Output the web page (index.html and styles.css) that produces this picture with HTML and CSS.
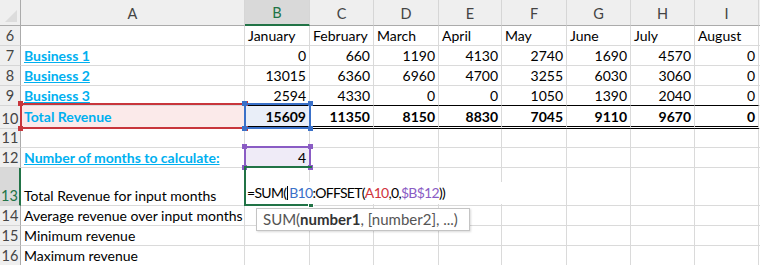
FILE: index.html
```html
<!DOCTYPE html>
<html lang="en">
<head>
  <meta charset="UTF-8" />
  <title>Revenue Sheet</title>
  <link rel="stylesheet" href="styles.css">
</head>
<body>
  <div class="sheet">
    <!-- column headers -->
    <div class="corner">
      <svg width="14" height="14" viewBox="0 0 14 14"><polygon points="13,1 13,13 1,13" fill="#dcdcdc"/></svg>
    </div>
    <div class="colhead">A</div>
    <div class="colhead sel">B</div>
    <div class="colhead">C</div>
    <div class="colhead">D</div>
    <div class="colhead">E</div>
    <div class="colhead">F</div>
    <div class="colhead">G</div>
    <div class="colhead">H</div>
    <div class="colhead">I</div>
    <div class="colhead"></div>

    <!-- row 6 -->
    <div class="rowhead">6</div>
    <div class="c"></div>
    <div class="c">January</div>
    <div class="c">February</div>
    <div class="c">March</div>
    <div class="c">April</div>
    <div class="c">May</div>
    <div class="c">June</div>
    <div class="c">July</div>
    <div class="c">August</div>
    <div class="c"></div>

    <!-- row 7 -->
    <div class="rowhead">7</div>
    <div class="c link"><u>Business 1</u></div>
    <div class="c num">0</div>
    <div class="c num">660</div>
    <div class="c num">1190</div>
    <div class="c num">4130</div>
    <div class="c num">2740</div>
    <div class="c num">1690</div>
    <div class="c num">4570</div>
    <div class="c num">0</div>
    <div class="c"></div>

    <!-- row 8 -->
    <div class="rowhead">8</div>
    <div class="c link"><u>Business 2</u></div>
    <div class="c num">13015</div>
    <div class="c num">6360</div>
    <div class="c num">6960</div>
    <div class="c num">4700</div>
    <div class="c num">3255</div>
    <div class="c num">6030</div>
    <div class="c num">3060</div>
    <div class="c num">0</div>
    <div class="c"></div>

    <!-- row 9 -->
    <div class="rowhead">9</div>
    <div class="c link"><u>Business 3</u></div>
    <div class="c num line">2594</div>
    <div class="c num line">4330</div>
    <div class="c num line">0</div>
    <div class="c num line">0</div>
    <div class="c num line">1050</div>
    <div class="c num line">1390</div>
    <div class="c num line">2040</div>
    <div class="c num line">0</div>
    <div class="c"></div>

    <!-- row 10 -->
    <div class="rowhead">10</div>
    <div class="c link fill-red">Total Revenue</div>
    <div class="c num total fill-blue">15609</div>
    <div class="c num total">11350</div>
    <div class="c num total">8150</div>
    <div class="c num total">8830</div>
    <div class="c num total">7045</div>
    <div class="c num total">9110</div>
    <div class="c num total">9670</div>
    <div class="c num total">0</div>
    <div class="c"></div>

    <!-- row 11 -->
    <div class="rowhead">11</div>
    <div class="c"></div><div class="c"></div><div class="c"></div><div class="c"></div><div class="c"></div>
    <div class="c"></div><div class="c"></div><div class="c"></div><div class="c"></div><div class="c"></div>

    <!-- row 12 -->
    <div class="rowhead">12</div>
    <div class="c link"><u>Number of months to calculate:</u></div>
    <div class="c num fill-purple">4</div>
    <div class="c"></div><div class="c"></div><div class="c"></div><div class="c"></div>
    <div class="c"></div><div class="c"></div><div class="c"></div><div class="c"></div>

    <!-- row 13 -->
    <div class="rowhead sel">13</div>
    <div class="c">Total Revenue for input months</div>
    <div class="c"></div><div class="c"></div><div class="c"></div><div class="c"></div>
    <div class="c"></div><div class="c"></div><div class="c"></div><div class="c"></div><div class="c"></div>

    <!-- row 14 -->
    <div class="rowhead">14</div>
    <div class="c">Average revenue over input months</div>
    <div class="c"></div><div class="c"></div><div class="c"></div><div class="c"></div>
    <div class="c"></div><div class="c"></div><div class="c"></div><div class="c"></div><div class="c"></div>

    <!-- row 15 -->
    <div class="rowhead">15</div>
    <div class="c">Minimum revenue</div>
    <div class="c"></div><div class="c"></div><div class="c"></div><div class="c"></div>
    <div class="c"></div><div class="c"></div><div class="c"></div><div class="c"></div><div class="c"></div>

    <!-- row 16 -->
    <div class="rowhead">16</div>
    <div class="c">Maximum revenue</div>
    <div class="c"></div><div class="c"></div><div class="c"></div><div class="c"></div>
    <div class="c"></div><div class="c"></div><div class="c"></div><div class="c"></div><div class="c"></div>

    <!-- formula reference highlights -->
    <div class="ref ref-red"><i class="tl"></i><i class="tr"></i><i class="bl"></i><i class="br"></i></div>
    <div class="ref ref-blue"><i class="tl"></i><i class="tr"></i><i class="bl"></i><i class="br"></i></div>
    <div class="ref ref-purple"><i class="tl"></i><i class="tr"></i><i class="bl"></i><i class="br"></i></div>

    <!-- active cell in edit mode -->
    <div class="active"><i class="handle"></i></div>
    <div class="editor">=SUM(<span class="caret"></span><span class="f-blue">B10</span>:OFFSET(<span class="f-red">A10</span>,0,<span class="f-purple">$B$12</span>))</div>

    <div class="tip">SUM(<b>number1</b>, [number2], ...)</div>
  </div>
</body>
</html>
```

FILE: styles.css
```css
* {
  margin: 0;
  padding: 0;
  box-sizing: border-box;
}

body {
  background: #fff;
  font-family: 'Lato', 'Liberation Sans', sans-serif;
  font-size: 14px;
  color: #000;
  overflow: hidden;
}

.sheet {
  position: relative;
  display: grid;
  grid-template-columns: 21px 224px 65px 64px 65px 63px 65px 64px 64px 64px 20px;
  grid-template-rows: 26px 20px 20px 20px 20px 23px 19px 20px 38px 20px 20px 20px;
}

/* headers */
.corner {
  background: #efefef;
  border-right: 1px solid #ababab;
  border-bottom: 1px solid #ababab;
  display: flex;
  align-items: flex-end;
  justify-content: flex-end;
  padding: 0 2px 2px 0;
}

.colhead {
  background: #efefef;
  border-right: 1px solid #d6d6d6;
  border-bottom: 1px solid #ababab;
  color: #444;
  display: flex;
  align-items: center;
  justify-content: center;
  padding-top: 1px;
  font-size: 14.5px;
}

.colhead.sel {
  background: #d9d9d9;
  color: #217346;
  border-bottom: 2px solid #217346;
}

.rowhead {
  background: #efefef;
  border-right: 1px solid #ababab;
  border-bottom: 1px solid #d6d6d6;
  color: #444;
  display: flex;
  align-items: flex-end;
  justify-content: center;
  line-height: 18px;
  font-size: 14.5px;
}

.rowhead.sel {
  background: #d9d9d9;
  color: #217346;
  border-right: 2px solid #217346;
}

/* cells */
.c {
  border-right: 1px solid #dadada;
  border-bottom: 1px solid #dadada;
  display: flex;
  align-items: flex-end;
  padding: 0 3px;
  line-height: 18px;
  white-space: nowrap;
}

.num {
  justify-content: flex-end;
}

.link {
  color: #00b0f0;
  font-weight: bold;
}

.line {
  border-bottom: 1px solid #000;
}

.total {
  font-weight: bold;
  border-bottom: 3px double #000;
}

.fill-red {
  background: #fbeaea;
  padding-bottom: 2px;
}

.fill-blue { background: #e9eef8; }
.fill-purple { background: #efebf7; }

/* reference boxes */
.ref {
  position: absolute;
  border: 2px solid currentColor;
}

.ref i {
  position: absolute;
  width: 5px;
  height: 5px;
  background: currentColor;
}

.ref .tl { left: -4px; top: -4px; }
.ref .tr { right: -4px; top: -4px; }
.ref .bl { left: -4px; bottom: -4px; }
.ref .br { right: -4px; bottom: -4px; }

.ref-red {
  color: #c8363c;
  left: 20px;
  top: 103px;
  width: 226px;
  height: 26px;
}

.ref-blue {
  color: #3a70c8;
  left: 244px;
  top: 103px;
  width: 67px;
  height: 26px;
}

.ref-purple {
  color: #8a5cc4;
  left: 244px;
  top: 146px;
  width: 67px;
  height: 22px;
}

/* editing cell */
.active {
  position: absolute;
  left: 244px;
  top: 166px;
  width: 68px;
  height: 40px;
  border: 2px solid #217346;
  border-right: none;
}

.active .handle {
  position: absolute;
  right: -2px;
  bottom: -4px;
  width: 6px;
  height: 6px;
  background: #217346;
  border: 1px solid #fff;
}

.editor {
  position: absolute;
  left: 246px;
  top: 182px;
  width: 274px;
  height: 22px;
  background: #fff;
  padding-left: 1px;
  line-height: 22px;
  letter-spacing: -0.7px;
  white-space: nowrap;
}

.caret {
  display: inline-block;
  width: 1px;
  height: 14px;
  margin: 0 1px;
  background: #000;
  vertical-align: -2px;
}

.f-blue { color: #3a70c8; }
.f-red { color: #d0343c; }
.f-purple { color: #8a5cc4; }

.tip {
  position: absolute;
  left: 256px;
  top: 208px;
  width: 214px;
  height: 23px;
  background: #fff;
  border: 1px solid #c4c4c4;
  box-shadow: 1px 1px 2px rgba(0, 0, 0, 0.15);
  font-size: 15px;
  color: #555;
  line-height: 21px;
  padding-left: 6px;
  white-space: nowrap;
}

.tip b {
  color: #333;
}
```
